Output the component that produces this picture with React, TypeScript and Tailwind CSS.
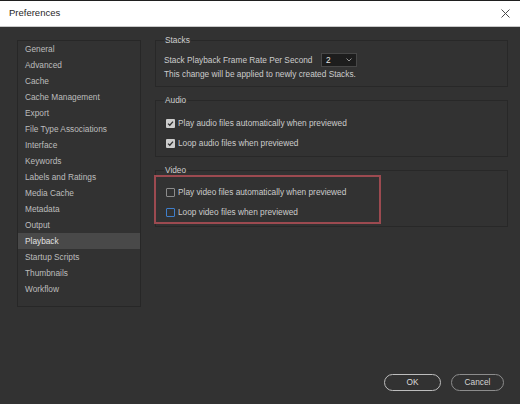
import type { ReactNode } from "react";

const categories = [
  "General",
  "Advanced",
  "Cache",
  "Cache Management",
  "Export",
  "File Type Associations",
  "Interface",
  "Keywords",
  "Labels and Ratings",
  "Media Cache",
  "Metadata",
  "Output",
  "Playback",
  "Startup Scripts",
  "Thumbnails",
  "Workflow",
];

function Section({ title, children, className = "" }: { title: string; children: ReactNode; className?: string }) {
  return (
    <fieldset className={`border border-[#282828] px-[8px] ${className}`}>
      <legend className="px-[1px] leading-[12px] text-[#cfcfcf]">{title}</legend>
      {children}
    </fieldset>
  );
}

function Checkbox({ checked, focused }: { checked?: boolean; focused?: boolean }) {
  if (checked) {
    return (
      <span className="flex h-[9px] w-[9px] items-center justify-center rounded-[1px] bg-[#cdcdcd]">
        <svg width="7" height="7" viewBox="0 0 7 7" fill="none">
          <path d="M1 3.6 2.8 5.3 6 1.6" stroke="#2e2e2e" strokeWidth="1.3" />
        </svg>
      </span>
    );
  }
  return (
    <span
      className={`h-[9px] w-[9px] rounded-[1px] border ${focused ? "border-[#3f7fcc]" : "border-[#8c8c8c]"}`}
    />
  );
}

function CheckRow({ label, checked, focused }: { label: string; checked?: boolean; focused?: boolean }) {
  return (
    <label className="flex h-[20px] items-center gap-[3px] pl-[2px] text-[#cccccc]">
      <Checkbox checked={checked} focused={focused} />
      <span className="leading-[12px]">{label}</span>
    </label>
  );
}

export default function App() {
  return (
    <div className="flex h-[404px] w-[520px] flex-col overflow-hidden bg-[#323232] font-['Liberation_Sans',Arial,sans-serif] text-[8.3px]">
      <div className="h-[1px] bg-[#1f1f1f]" />
      <header className="flex h-[26px] items-center justify-between border-b border-[#c9c9c9] bg-white pl-[9px] pr-[10px]">
        <span className="text-[9.5px] text-[#1f1f1f]">Preferences</span>
        <svg width="9" height="9" viewBox="0 0 9 9" fill="none">
          <path d="M0.5 0.5 8.5 8.5M8.5 0.5 0.5 8.5" stroke="#4a4a4a" strokeWidth="1" />
        </svg>
      </header>

      <div className="flex items-start pt-[7px]">
        <nav className="ml-[17px] mt-[6px] h-[267px] w-[124px] border border-[#272727]">
          {categories.map((name) => (
            <div
              key={name}
              className={`h-[16px] pl-[7px] leading-[16px] ${
                name === "Playback" ? "bg-[#494949] text-[#e2e2e2]" : "text-[#bdbdbd]"
              }`}
            >
              {name}
            </div>
          ))}
        </nav>

        <div className="ml-[14px] flex w-[353px] flex-col gap-[7px]">
          <Section title="Stacks" className="pb-[6px]">
            <div className="mt-[7px] flex h-[14px] items-center text-[#cccccc]">
              <span className="w-[157px]">Stack Playback Frame Rate Per Second</span>
              <div className="flex h-[14px] w-[36px] items-center justify-between border border-[#474747] bg-[#1d1d1d] px-[4px]">
                <span className="text-[#e4e4e4]">2</span>
                <svg width="6" height="4" viewBox="0 0 6 4" fill="none">
                  <path d="M0.5 0.5 3 3 5.5 0.5" stroke="#a0a0a0" strokeWidth="0.9" />
                </svg>
              </div>
            </div>
            <p className="mt-[1px] leading-[12px] text-[#cccccc]">
              This change will be applied to newly created Stacks.
            </p>
          </Section>

          <Section title="Audio" className="pb-[3px]">
            <div className="pt-[7px]">
              <CheckRow label="Play audio files automatically when previewed" checked />
              <CheckRow label="Loop audio files when previewed" checked />
            </div>
          </Section>

          <Section title="Video" className="pb-[2px]">
            <div className="-ml-[10px] -mt-[1px] w-[227px] border-2 border-[#9c4a50] pl-[8px] pt-[5px]">
              <CheckRow label="Play video files automatically when previewed" />
              <CheckRow label="Loop video files when previewed" focused />
            </div>
          </Section>
        </div>
      </div>

      <div className="mt-auto flex justify-end gap-[10px] pb-[13px] pr-[16px]">
        <button className="h-[17px] w-[57px] rounded-full border border-[#bdbdbd] text-[#dcdcdc]">OK</button>
        <button className="h-[17px] w-[53px] rounded-full border border-[#8c8c8c] text-[#d4d4d4]">Cancel</button>
      </div>
    </div>
  );
}
